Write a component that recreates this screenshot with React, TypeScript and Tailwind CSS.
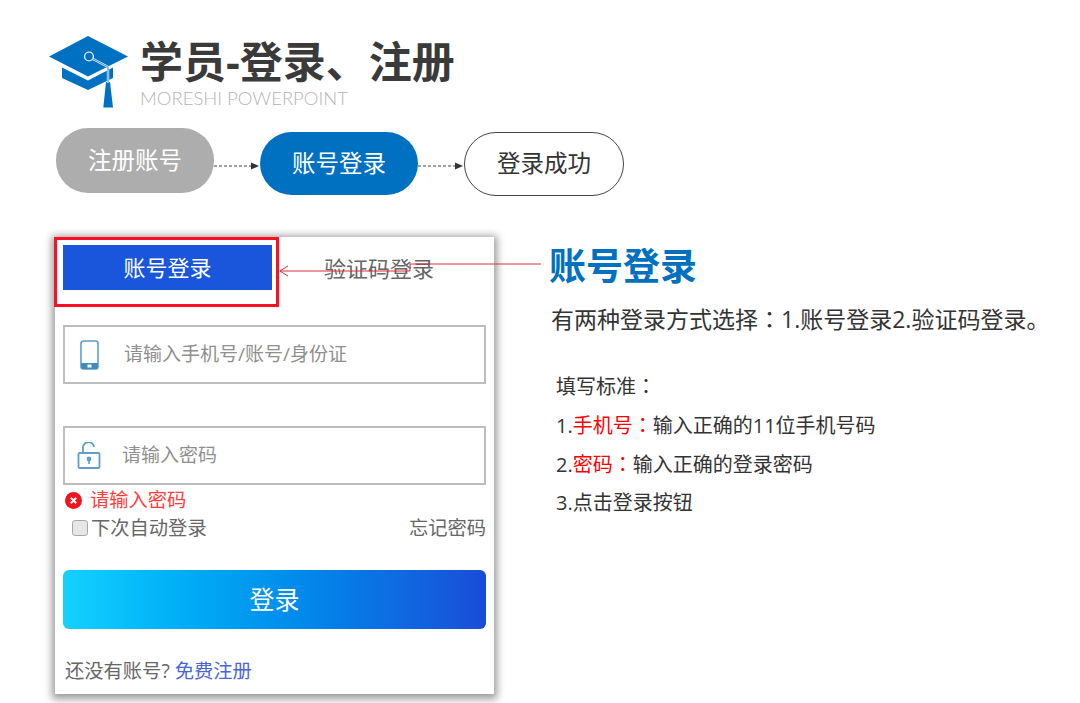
const sans = "font-['Open_Sans','Noto_Sans_CJK_SC',sans-serif]";

const Colon = () => <span className="font-['Noto_Sans_CJK_TC',sans-serif]">：</span>;

const Cap = () => (
  <svg width="80" height="72" viewBox="0 0 80 72" className="shrink-0">
    <polygon points="40,0 80,20.5 40,40.5 1,20.5" fill="#0070c0" />
    <polygon points="14,31.5 40,44.5 65,31.5 65,42 40,54 14,42" fill="#0070c0" />
    <polygon points="58,46 62,46 65,71.5 55.3,71.5" fill="#0070c0" />
    <path d="M45 23 L60 31 L60 47" fill="none" stroke="#dcebf6" strokeWidth="2.4" />
    <path d="M45 23 L60 31 L60 47" fill="none" stroke="#0070c0" strokeWidth="0.7" />
    <circle cx="41" cy="20.5" r="4.4" fill="#0070c0" stroke="#dcebf6" strokeWidth="1.4" />
  </svg>
);

const StepArrow = () => (
  <svg width="46" height="10" viewBox="0 0 46 10" className="shrink-0">
    <line x1="0" y1="5" x2="38" y2="5" stroke="#444" strokeWidth="1" strokeDasharray="3 2" />
    <polygon points="37,1.5 45,5 37,8.5" fill="#333" />
  </svg>
);

const PhoneIcon = () => (
  <svg width="20" height="30" viewBox="0 0 20 30" className="shrink-0">
    <rect x="1" y="1" width="17" height="28" rx="2.5" fill="#fff" stroke="#5f9fc9" strokeWidth="1.6" />
    <path d="M1 23 H18 V26.5 A2.5 2.5 0 0 1 15.5 29 H3.5 A2.5 2.5 0 0 1 1 26.5 Z" fill="#3f8cbf" />
    <rect x="7.5" y="24.5" width="4" height="3" fill="#fff" />
  </svg>
);

const LockIcon = () => (
  <svg width="24" height="27" viewBox="0 0 24 27" className="shrink-0">
    <path d="M6 11 V6.5 A5.5 5.5 0 0 1 17 5" fill="none" stroke="#5f9fc9" strokeWidth="1.8" />
    <rect x="1.5" y="11" width="21" height="15" rx="1" fill="#fff" stroke="#5f9fc9" strokeWidth="1.8" />
    <circle cx="12" cy="17" r="2.4" fill="#5f9fc9" />
    <rect x="11.2" y="18" width="1.6" height="4" fill="#5f9fc9" />
  </svg>
);

const ErrorIcon = () => (
  <svg width="17" height="17" viewBox="0 0 17 17" className="shrink-0">
    <circle cx="8.5" cy="8.5" r="8.5" fill="#f0141e" />
    <path d="M5.8 5.8 L11.2 11.2 M11.2 5.8 L5.8 11.2" stroke="#fff" strokeWidth="2" />
  </svg>
);

const Field = ({ icon, label, iconBox }: { icon: React.ReactNode; label: string; iconBox: string }) => (
  <div className="flex h-[59px] items-center border-2 border-[#bdbdbd] bg-white">
    <div className={iconBox}>{icon}</div>
    <span className="text-[19px] leading-none text-[#8f8f8f]">{label}</span>
  </div>
);

export default function App() {
  return (
    <div className={`relative h-[703px] w-[1080px] overflow-hidden bg-white text-[#333] ${sans}`}>
      <header className="flex items-start gap-3 pl-12 pt-9">
        <Cap />
        <div className="flex flex-col">
          <h1 className="mt-[1px] text-[43px] font-bold leading-[50px] text-[#3a3a3a]">学员-登录、注册</h1>
          <p className="mt-[1px] font-['Lato',sans-serif] text-[18.5px] font-light leading-[20px] text-[#b4b4b4]">
            MORESHI POWERPOINT
          </p>
        </div>
      </header>

      <div className="mt-5 flex items-start pl-14 text-[23.5px] leading-none">
        <div className="flex h-[65px] w-[158px] items-center justify-center rounded-[32px] bg-[#adadad] text-white">
          注册账号
        </div>
        <div className="mt-[33px]">
          <StepArrow />
        </div>
        <div className="mt-1 flex h-[63px] w-[158px] items-center justify-center rounded-[32px] bg-[#0070c0] text-white">
          账号登录
        </div>
        <div className="mt-[33px]">
          <StepArrow />
        </div>
        <div className="mt-1 flex h-[64px] w-[160px] items-center justify-center rounded-[32px] border border-[#444] text-[#333]">
          登录成功
        </div>
      </div>

      <main className="mt-[41px] flex items-start pl-[55px]">
        <section className="relative h-[457px] w-[439px] shrink-0 bg-white px-2 shadow-[0_2px_8px_3px_rgba(0,0,0,0.4)]">
          <div className="flex pt-2">
            <div className="flex h-[45px] w-[209px] items-center justify-center bg-[#1a56db] text-[22px] text-white">
              账号登录
            </div>
            <div className="flex h-[45px] flex-1 items-center justify-center pt-[2px] text-[22px] text-[#666]">
              验证码登录
            </div>
          </div>
          <div className="mt-[35px]">
            <Field icon={<PhoneIcon />} label="请输入手机号/账号/身份证" iconBox="ml-[15px] mr-[24px]" />
          </div>
          <div className="mt-[42px]">
            <Field icon={<LockIcon />} label="请输入密码" iconBox="ml-[12px] mr-[21px]" />
          </div>
          <div className="mt-[5px] flex items-center gap-2 pl-[2px] text-[19.3px] leading-[20px] text-[#ff3b3b]">
            <ErrorIcon />
            <span>请输入密码</span>
          </div>
          <div className="mt-[7px] flex items-center justify-between text-[19.3px] leading-[22px] text-[#666]">
            <label className="flex items-center pl-[9px]">
              <span className="mr-[3px] h-4 w-4 rounded-[3px] border border-[#a8a8a8] bg-[#e6e6e6]" />
              下次自动登录
            </label>
            <span>忘记密码</span>
          </div>
          <button className="mt-[31px] flex h-[59px] w-full items-center justify-center rounded-md bg-gradient-to-r from-[#14d2ff] to-[#1a4bd8] text-[25px] text-white">
            登录
          </button>
          <p className="mt-[31px] pl-[2px] text-[19.3px] leading-[22px] text-[#666]">
            还没有账号? <span className="text-[#4a66d8]">免费注册</span>
          </p>
          <div className="pointer-events-none absolute left-[-1px] top-0 h-[70px] w-[225px] border-[3px] border-[#ff0f23]" />
        </section>

        <section className="ml-[55px] flex flex-col">
          <h2 className="mt-[4px] text-[37px] font-bold leading-[50px] text-[#0070c0]">账号登录</h2>
          <p className="ml-[2px] mt-[11px] whitespace-nowrap text-[23px] leading-[32px] text-[#333]">
            有两种登录方式选择<Colon />1.账号登录2.验证码登录。
          </p>
          <ul className="ml-[7px] mt-[32px] flex flex-col text-[20px] leading-[38px] text-[#333]">
            <li>
              填写标准<Colon />
            </li>
            <li>
              1.<span className="text-[#ff0000]">手机号<Colon /></span>输入正确的11位手机号码
            </li>
            <li>
              2.<span className="text-[#ff0000]">密码<Colon /></span>输入正确的登录密码
            </li>
            <li>3.点击登录按钮</li>
          </ul>
        </section>
      </main>

      <svg className="pointer-events-none absolute left-[275px] top-[258px]" width="270" height="20" viewBox="0 0 270 20">
        <path d="M266 6 H135 V13 H5" fill="none" stroke="#d8303c" strokeWidth="1" />
        <path d="M13 8 L5 13 L13 18" fill="none" stroke="#d8303c" strokeWidth="1" />
      </svg>
    </div>
  );
}
